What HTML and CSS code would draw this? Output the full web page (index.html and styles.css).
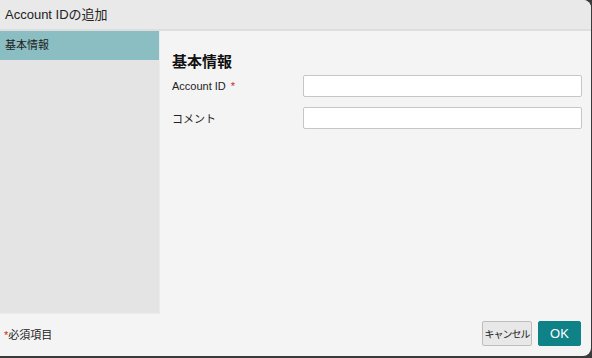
FILE: index.html
```html
<!DOCTYPE html>
<html lang="ja">
<head>
    <meta charset="UTF-8">
    <meta name="viewport" content="width=device-width, initial-scale=1.0">
    <title>Account IDの追加</title>
    <link rel="stylesheet" href="styles.css">
</head>
<body>
    <div class="dialog">
        <div class="dialog-title">Account IDの追加</div>

        <div class="dialog-body">
            <div class="side-menu">
                <div class="side-item active">基本情報</div>
            </div>

            <div class="content">
                <h2>基本情報</h2>
                <div class="form-row">
                    <label>Account ID <span class="req">*</span></label>
                    <input type="text">
                </div>
                <div class="form-row">
                    <label>コメント</label>
                    <input type="text">
                </div>
            </div>
        </div>

        <div class="dialog-footer">
            <span class="note"><span class="req">*</span>必須項目</span>
            <div class="buttons">
                <button type="button" class="btn-cancel">キャンセル</button>
                <button type="button" class="btn-ok">OK</button>
            </div>
        </div>
    </div>
</body>
</html>
```

FILE: styles.css
```css
html, body {
    margin: 0;
    height: 100%;
}

body {
    background-color: #3a3a3a;
    font-family: "Liberation Sans", Arial, "Noto Sans CJK JP", sans-serif;
    color: #222;
}

.dialog {
    width: 591px;
    height: 356px;
    background-color: #f4f4f4;
    border-radius: 0 8px 8px 0;
    overflow: hidden;
    display: flex;
    flex-direction: column;
}

.dialog-title {
    height: 29px;
    line-height: 29px;
    padding-left: 5px;
    font-size: 13px;
    background-color: #e9e9e9;
    border-bottom: 2px solid #dedede;
}

.dialog-body {
    display: flex;
    height: 283px;
}

.side-menu {
    width: 159px;
    flex-shrink: 0;
    background-color: #e4e4e4;
    border-right: 1px solid #ebebeb;
    border-bottom: 1px solid #ebebeb;
}

.side-item {
    height: 29px;
    line-height: 28px;
    padding-left: 5px;
    font-size: 11px;
    color: #222;
}

.side-item.active {
    background-color: #8abec2;
}

.content {
    flex: 1;
    padding: 19px 8px 0 12px;
}

.content h2 {
    margin: 0 0 4px 0;
    font-size: 15px;
    font-weight: bold;
    color: #111;
}

.form-row {
    display: flex;
    align-items: center;
    margin-bottom: 10px;
}

.form-row label {
    width: 131px;
    flex-shrink: 0;
    font-size: 11px;
    color: #222;
}

.form-row input {
    width: 279px;
    height: 22px;
    box-sizing: border-box;
    border: 1px solid #c6c6c6;
    border-radius: 2px;
    background-color: white;
    margin: 0;
}

.req {
    color: #c62828;
    padding-left: 2px;
}

.note .req {
    padding-left: 0;
}

.dialog-footer {
    flex: 1;
    display: flex;
    justify-content: space-between;
    align-items: center;
    padding: 0 10px 3px 4px;
}

.note {
    font-size: 11px;
    color: #222;
}

.buttons {
    display: flex;
    gap: 6px;
}

.buttons button {
    height: 25px;
    font-family: inherit;
    font-size: 11px;
    border-radius: 2px;
    white-space: nowrap;
    cursor: pointer;
}

.btn-cancel {
    width: 50px;
    padding: 0;
    background-color: #e8e8e8;
    border: 1px solid #bdbdbd;
    color: #222;
    font-size: 10px !important;
    letter-spacing: -1px;
}

.btn-ok {
    width: 43px;
    background-color: #0f8287;
    border: 1px solid #0f8287;
    color: white;
    font-size: 13px !important;
}
```
